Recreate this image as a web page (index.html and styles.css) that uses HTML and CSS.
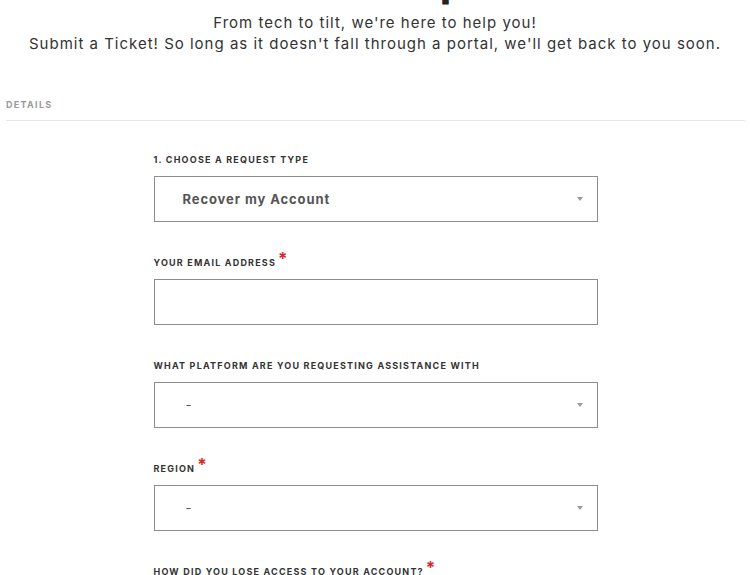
FILE: index.html
```html
<!DOCTYPE html>
<html lang="en">
<head>
    <meta charset="UTF-8">
    <meta name="viewport" content="width=device-width, initial-scale=1.0">
    <title>Get Help</title>
    <link rel="stylesheet" href="styles.css">
</head>
<body>
    <header class="hero">
        <h1>Get Help</h1>
        <p>From tech to tilt, we're here to help you!<br>
        Submit a Ticket! So long as it doesn't fall through a portal, we'll get back to you soon.</p>
    </header>

    <section class="details">
        <div class="details-title">DETAILS</div>

        <form class="ticket-form">
            <div class="field">
                <label>1. Choose a request type</label>
                <div class="select">
                    <span class="value strong">Recover my Account</span>
                    <svg class="caret" width="6" height="4" viewBox="0 0 6 4"><path d="M0 0h6L3 4z" fill="#9a9a9a"/></svg>
                </div>
            </div>

            <div class="field">
                <label>Your email address<span class="req">*</span></label>
                <input class="text-input" type="email">
            </div>

            <div class="field">
                <label>What platform are you requesting assistance with</label>
                <div class="select">
                    <span class="value">-</span>
                    <svg class="caret" width="6" height="4" viewBox="0 0 6 4"><path d="M0 0h6L3 4z" fill="#9a9a9a"/></svg>
                </div>
            </div>

            <div class="field">
                <label>Region<span class="req">*</span></label>
                <div class="select">
                    <span class="value">-</span>
                    <svg class="caret" width="6" height="4" viewBox="0 0 6 4"><path d="M0 0h6L3 4z" fill="#9a9a9a"/></svg>
                </div>
            </div>

            <div class="field">
                <label>How did you lose access to your account?<span class="req">*</span></label>
            </div>
        </form>
    </section>
</body>
</html>
```

FILE: styles.css
```css
body {
    font-family: 'Inter', 'Noto Sans', Arial, sans-serif;
    background-color: #fff;
    color: #333;
    margin: 0;
    padding: 0;
    overflow: hidden;
}

.hero {
    text-align: center;
}

.hero h1 {
    font-size: 44px;
    line-height: 44px;
    font-weight: 700;
    color: #222;
    margin: -42px 0 0;
}

.hero p {
    font-size: 15px;
    line-height: 21px;
    letter-spacing: 1px;
    color: #333;
    margin: 10px 0 0;
}

.details {
    padding: 0 5px 0 6px;
    margin-top: 45px;
}

.details-title {
    font-size: 9px;
    font-weight: 700;
    letter-spacing: 1.3px;
    color: #999;
    line-height: 12px;
    padding-bottom: 9px;
    border-bottom: 1px solid #e6e6e6;
}

.ticket-form {
    width: 444px;
    margin: 33px auto 0;
}

.field {
    margin-bottom: 35px;
}

.field label {
    display: block;
    height: 12px;
    font-size: 9px;
    line-height: 12px;
    font-weight: 700;
    letter-spacing: 1.2px;
    text-transform: uppercase;
    color: #333;
    margin-bottom: 10px;
}

.req {
    color: #d8282e;
    font-size: 17px;
    line-height: 0;
    vertical-align: 1px;
    margin-left: 2px;
}

.select,
.text-input {
    box-sizing: border-box;
    width: 100%;
    height: 46px;
    border: 1px solid #8c8c8c;
    background: #fff;
}

.select {
    display: flex;
    align-items: center;
    justify-content: space-between;
    padding: 0 14px 0 28px;
}

.value {
    font-size: 13px;
    color: #555;
    letter-spacing: 0.9px;
    padding-left: 3px;
}

.value.strong {
    font-weight: 700;
    padding-left: 0;
}

.text-input {
    display: block;
    padding: 0 16px;
    font: inherit;
    outline: none;
}
```
